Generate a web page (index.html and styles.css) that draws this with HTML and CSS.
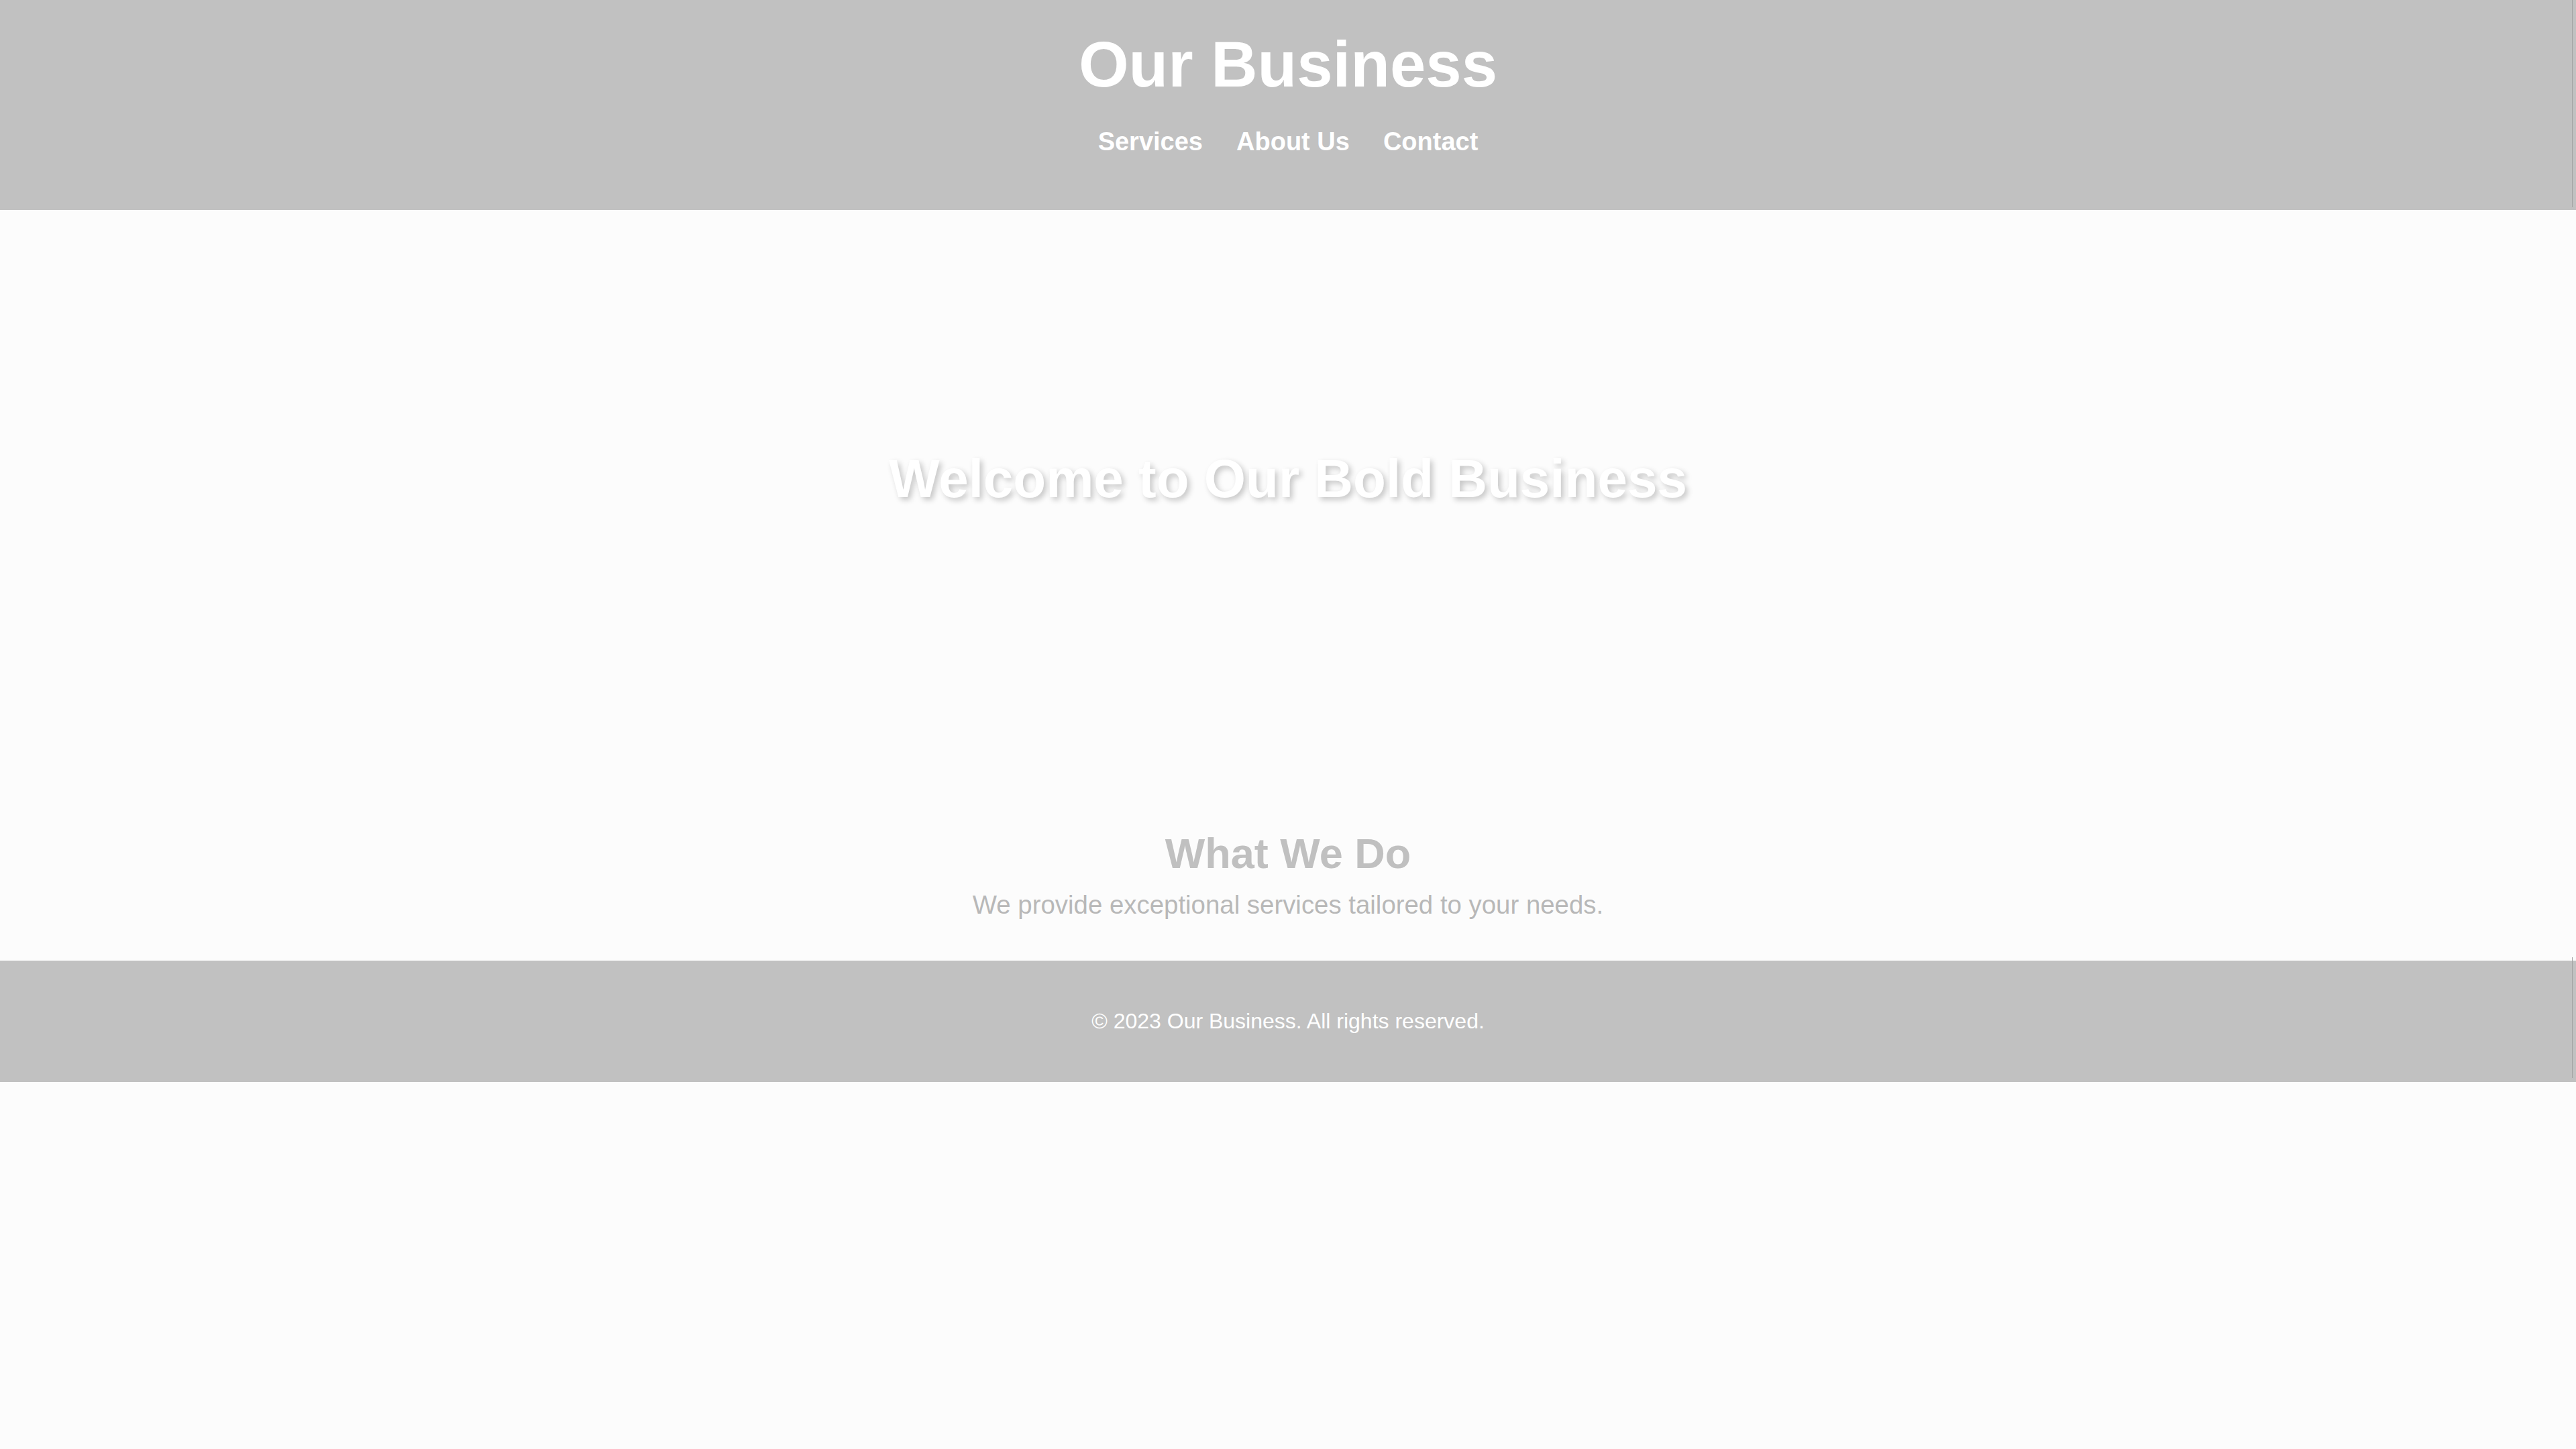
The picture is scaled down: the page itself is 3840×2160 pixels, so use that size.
FILE: index.html
```html
<!DOCTYPE html>
<html lang="en">
<head>
<meta charset="utf-8">
<title>Our Business</title>
<link rel="stylesheet" href="styles.css">
</head>
<body>
<header class="site-header">
  <h1 class="brand">Our Business</h1>
  <nav class="nav">
    <a class="nav-link" href="#">Services</a>
    <a class="nav-link" href="#">About Us</a>
    <a class="nav-link" href="#">Contact</a>
  </nav>
</header>
<section class="hero">
  <h2 class="hero-title">Welcome to Our Bold Business</h2>
</section>
<section class="about">
  <h2 class="about-title">What We Do</h2>
  <p class="about-text">We provide exceptional services tailored to your needs.</p>
</section>
<footer class="site-footer">
  <p class="copy">&copy; 2023 Our Business. All rights reserved.</p>
</footer>
</body>
</html>
```
FILE: styles.css
```css
html, body {
  margin: 0;
  padding: 0;
}
body {
  background: #fcfcfc;
  font-family: "Liberation Sans", Arial, sans-serif;
  color: #ffffff;
  min-height: 2160px;
}
.site-header {
  position: relative;
  background: #c1c1c1;
  height: 313px;
  box-sizing: border-box;
  padding-top: 41px;
  display: flex;
  flex-direction: column;
  align-items: center;
}
.site-header::after,
.site-footer::after {
  content: "";
  position: absolute;
  right: 5px;
  width: 1px;
  background: #a3a3a3;
}
.site-header::after {
  top: 0;
  height: 309px;
}
.brand {
  margin: 0;
  font-size: 96px;
  font-weight: bold;
  line-height: 110px;
  color: #ffffff;
}
.nav {
  margin-top: 38px;
  display: flex;
  gap: 50px;
}
.nav-link {
  color: #ffffff;
  text-decoration: none;
  font-weight: bold;
  font-size: 38px;
  line-height: 44px;
}
.hero {
  height: 801px;
  display: flex;
  align-items: center;
  justify-content: center;
}
.hero-title {
  margin: 0;
  font-size: 80px;
  font-weight: bold;
  line-height: 92px;
  color: #ffffff;
  text-shadow: 4px 4px 9px rgba(0, 0, 0, 0.22);
}
.about {
  height: 318px;
  box-sizing: border-box;
  padding-top: 122px;
  text-align: center;
}
.about-title {
  margin: 0;
  font-size: 63px;
  font-weight: bold;
  line-height: 72px;
  color: #c0c0c0;
}
.about-text {
  margin: 19px 0 0;
  font-size: 38.4px;
  line-height: 44px;
  color: #b8b8b8;
}
.site-footer {
  position: relative;
  background: #c1c1c1;
  height: 181px;
  display: flex;
  align-items: center;
  justify-content: center;
}
.site-footer::after {
  top: -5px;
  height: 180px;
}
.copy {
  margin: 0;
  font-size: 32px;
  line-height: 37px;
  color: #ffffff;
}
```
